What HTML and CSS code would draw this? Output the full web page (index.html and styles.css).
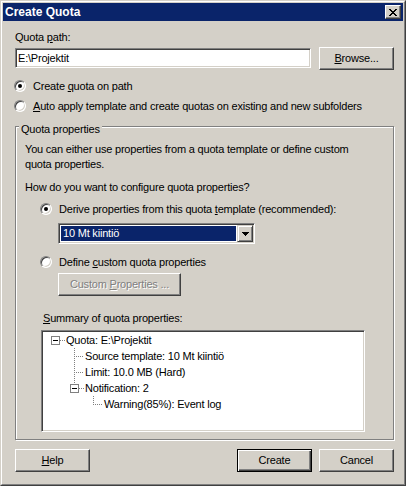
FILE: index.html
```html
<!DOCTYPE html>
<html>
<head>
<meta charset="utf-8">
<link rel="stylesheet" href="styles.css">
</head>
<body>
<div class="window">
  <div class="frame">
    <div class="titlebar">
      <span class="title">Create Quota</span>
      <span class="close">
        <svg width="8" height="7" viewBox="0 0 8 7" shape-rendering="crispEdges">
          <path fill="#000" d="M0 0h2v1H0zM6 0h2v1H6zM1 1h2v1H1zM5 1h2v1H5zM2 2h4v1H2zM3 3h2v1H3zM2 4h4v1H2zM1 5h2v1H1zM5 5h2v1H5zM0 6h2v1H0zM6 6h2v1H6z"/>
        </svg>
      </span>
    </div>
    <div class="body">
      <div class="path-label">Quota <u>p</u>ath:</div>
      <div class="path-row">
        <div class="textbox">E:\Projektit</div>
        <div class="btn browse"><span><u>B</u>rowse...</span></div>
      </div>
      <div class="radio-row r1"><span class="radio checked"></span><span>Create <u>q</u>uota on path</span></div>
      <div class="radio-row r2"><span class="radio"></span><span><u>A</u>uto apply template and create quotas on existing and new subfolders</span></div>
      <fieldset class="group">
        <legend>Quota properties</legend>
        <div class="group-inner">
          <p class="intro">You can either use properties from a quota template or define custom<br>quota properties.</p>
          <p class="question">How do you want to configure quota properties?</p>
          <div class="radio-row sub derive"><span class="radio checked"></span><span>Derive properties from this quota <u>t</u>emplate (recommended):</span></div>
          <div class="combo">
            <div class="combo-sel">10 Mt kiintiö</div>
            <div class="combo-arrow">
              <svg width="7" height="4" viewBox="0 0 7 4" shape-rendering="crispEdges"><path fill="#000" d="M0 0h7v1H0zM1 1h5v1H1zM2 2h3v1H2zM3 3h1v1H3z"/></svg>
            </div>
          </div>
          <div class="radio-row sub define"><span class="radio"></span><span>Define <u>c</u>ustom quota properties</span></div>
          <div class="btn custom disabled"><span>Custom <u>P</u>roperties ...</span></div>
          <div class="summary-label"><u>S</u>ummary of quota properties:</div>
          <div class="tree">
            <div class="tree-row">
              <svg class="cell" width="19" height="16" viewBox="0 0 19 16" shape-rendering="crispEdges">
                <rect x="5.5" y="4.5" width="8" height="8" fill="#fff" stroke="#808080"/>
                <rect x="7" y="8" width="5" height="1" fill="#000"/>
                <line x1="14" y1="8.5" x2="19" y2="8.5" stroke="#808080" stroke-dasharray="1 1"/>
              </svg>
              <span class="tree-text">Quota: E:\Projektit</span>
            </div>
            <div class="tree-row">
              <span class="cell"></span>
              <svg class="cell" width="19" height="16" viewBox="0 0 19 16" shape-rendering="crispEdges">
                <line x1="9.5" y1="0" x2="9.5" y2="16" stroke="#808080" stroke-dasharray="1 1"/>
                <line x1="11" y1="8.5" x2="19" y2="8.5" stroke="#808080" stroke-dasharray="1 1"/>
              </svg>
              <span class="tree-text">Source template: 10 Mt kiintiö</span>
            </div>
            <div class="tree-row">
              <span class="cell"></span>
              <svg class="cell" width="19" height="16" viewBox="0 0 19 16" shape-rendering="crispEdges">
                <line x1="9.5" y1="0" x2="9.5" y2="16" stroke="#808080" stroke-dasharray="1 1"/>
                <line x1="11" y1="8.5" x2="19" y2="8.5" stroke="#808080" stroke-dasharray="1 1"/>
              </svg>
              <span class="tree-text">Limit: 10.0 MB (Hard)</span>
            </div>
            <div class="tree-row">
              <span class="cell"></span>
              <svg class="cell" width="19" height="16" viewBox="0 0 19 16" shape-rendering="crispEdges">
                <line x1="9.5" y1="0" x2="9.5" y2="4" stroke="#808080" stroke-dasharray="1 1"/>
                <rect x="5.5" y="4.5" width="8" height="8" fill="#fff" stroke="#808080"/>
                <rect x="7" y="8" width="5" height="1" fill="#000"/>
                <line x1="14" y1="8.5" x2="19" y2="8.5" stroke="#808080" stroke-dasharray="1 1"/>
              </svg>
              <span class="tree-text">Notification: 2</span>
            </div>
            <div class="tree-row">
              <span class="cell"></span>
              <span class="cell"></span>
              <svg class="cell" width="19" height="16" viewBox="0 0 19 16" shape-rendering="crispEdges">
                <line x1="9.5" y1="0" x2="9.5" y2="9" stroke="#808080" stroke-dasharray="1 1"/>
                <line x1="11" y1="8.5" x2="19" y2="8.5" stroke="#808080" stroke-dasharray="1 1"/>
              </svg>
              <span class="tree-text">Warning(85%): Event log</span>
            </div>
          </div>
        </div>
      </fieldset>
      <div class="buttons">
        <div class="btn"><span><u>H</u>elp</span></div>
        <div class="spacer"></div>
        <div class="btn default"><span>Create</span></div>
        <div class="btn"><span>Cancel</span></div>
      </div>
    </div>
  </div>
</div>
</body>
</html>
```

FILE: styles.css
```css
html, body {
  margin: 0;
  padding: 0;
  background: #d4d0c8;
}
body {
  font-family: "Liberation Sans", Arial, sans-serif;
  font-size: 11px;
  line-height: 13px;
  letter-spacing: -0.2px;
  color: #000;
}
u {
  text-decoration: underline;
  text-underline-offset: 1px;
}
.window {
  width: 406px;
  height: 486px;
  box-sizing: border-box;
  border: 1px solid;
  border-color: #d4d0c8 #404040 #404040 #d4d0c8;
}
.frame {
  height: 100%;
  box-sizing: border-box;
  border: 1px solid;
  border-color: #fff #808080 #808080 #fff;
  padding: 1px;
  display: flex;
  flex-direction: column;
}
.titlebar {
  height: 18px;
  flex: none;
  background: #0a246a;
  color: #fff;
  display: flex;
  align-items: center;
  justify-content: space-between;
  padding: 0 2px;
}
.title {
  font-weight: bold;
  font-size: 12px;
  letter-spacing: 0;
}
.close {
  width: 16px;
  height: 14px;
  box-sizing: border-box;
  background: #d4d0c8;
  border: 1px solid;
  border-color: #fff #404040 #404040 #fff;
  box-shadow: inset -1px -1px 0 #808080;
  display: flex;
  align-items: center;
  justify-content: center;
}
.body {
  flex: 1;
  padding: 0 9px 0 12px;
}
.path-label {
  margin-top: 10px;
}
.path-row {
  margin-top: 3px;
  display: flex;
  align-items: flex-start;
  gap: 8px;
}
.textbox {
  width: 296px;
  height: 20px;
  margin-top: 1px;
  box-sizing: border-box;
  background: #fff;
  border: 1px solid;
  border-color: #808080 #fff #fff #808080;
  box-shadow: inset 1px 1px 0 #404040, inset -1px -1px 0 #d4d0c8;
  padding-left: 2px;
  display: flex;
  align-items: center;
}
.btn {
  width: 75px;
  height: 23px;
  box-sizing: border-box;
  background: #d4d0c8;
  border: 1px solid;
  border-color: #fff #404040 #404040 #fff;
  box-shadow: inset -1px -1px 0 #808080;
  display: flex;
  align-items: center;
  justify-content: center;
}
.btn.default {
  border: 1px solid #000;
  box-shadow: inset 1px 1px 0 #fff, inset -1px -1px 0 #404040, inset -2px -2px 0 #808080;
}
.btn.disabled {
  color: #808080;
  text-shadow: 1px 1px 0 #fff;
}
.radio-row {
  display: flex;
  align-items: center;
  height: 14px;
}
.radio {
  width: 12px;
  height: 12px;
  box-sizing: border-box;
  border-radius: 50%;
  background: #fff;
  border: 1px solid;
  border-color: #808080 #fff #fff #808080;
  box-shadow: inset 1px 1px 0 #404040, inset -1px -1px 0 #d4d0c8;
  margin-left: -1px;
  margin-right: 7px;
  display: flex;
  align-items: center;
  justify-content: center;
  flex: none;
}
.radio.checked::after {
  content: "";
  width: 4px;
  height: 4px;
  border-radius: 50%;
  background: #000;
}
.r1 { margin-top: 9px; }
.r2 { margin-top: 6px; }
.group {
  width: 379px;
  box-sizing: border-box;
  margin: 4px 0 0 0;
  padding: 0 0 7px 0;
  border: 1px solid #808080;
  box-shadow: inset 1px 1px 0 #fff, 1px 1px 0 #fff;
  min-width: 0;
}
.group legend {
  margin-left: 3px;
  padding: 6px 2px 0 2px;
  background: #d4d0c8;
  line-height: 13px;
}
.group-inner {
  padding-left: 0;
}
.intro {
  margin: 6px 0 0 9px;
  line-height: 15px;
}
.question {
  margin: 9px 0 0 9px;
}
.radio-row.sub .radio {
  margin-left: 24px;
}
.derive { margin-top: 8px; }
.combo {
  margin: 7px 0 0 42px;
  width: 197px;
  height: 21px;
  box-sizing: border-box;
  background: #fff;
  border: 1px solid;
  border-color: #808080 #fff #fff #808080;
  box-shadow: inset 1px 1px 0 #404040, inset -1px -1px 0 #d4d0c8;
  padding: 1px;
  display: flex;
}
.combo-sel {
  flex: 1;
  margin: 1px;
  background: #0a246a;
  color: #fff;
  padding-left: 2px;
  display: flex;
  align-items: center;
}
.combo-arrow {
  width: 16px;
  height: 17px;
  box-sizing: border-box;
  background: #d4d0c8;
  border: 1px solid;
  border-color: #d4d0c8 #404040 #404040 #d4d0c8;
  box-shadow: inset 1px 1px 0 #fff, inset -1px -1px 0 #808080;
  display: flex;
  align-items: center;
  justify-content: center;
}
.define { margin-top: 11px; }
.custom {
  width: 123px;
  margin: 4px 0 0 42px;
}
.summary-label {
  margin: 16px 0 0 27px;
}
.tree {
  margin: 5px 0 0 25px;
  width: 324px;
  height: 102px;
  box-sizing: border-box;
  background: #fff;
  border: 1px solid;
  border-color: #808080 #fff #fff #808080;
  box-shadow: inset 1px 1px 0 #404040, inset -1px -1px 0 #d4d0c8;
  padding: 1px 0 0 4px;
}
.tree-row {
  display: flex;
  height: 16px;
  align-items: center;
}
.cell {
  width: 19px;
  height: 16px;
  flex: none;
  display: block;
}
.tree-text {
  margin-left: 1px;
  line-height: 16px;
  white-space: nowrap;
}
.buttons {
  margin-top: 9px;
  display: flex;
  gap: 7px;
}
.spacer {
  flex: 1;
}
```
